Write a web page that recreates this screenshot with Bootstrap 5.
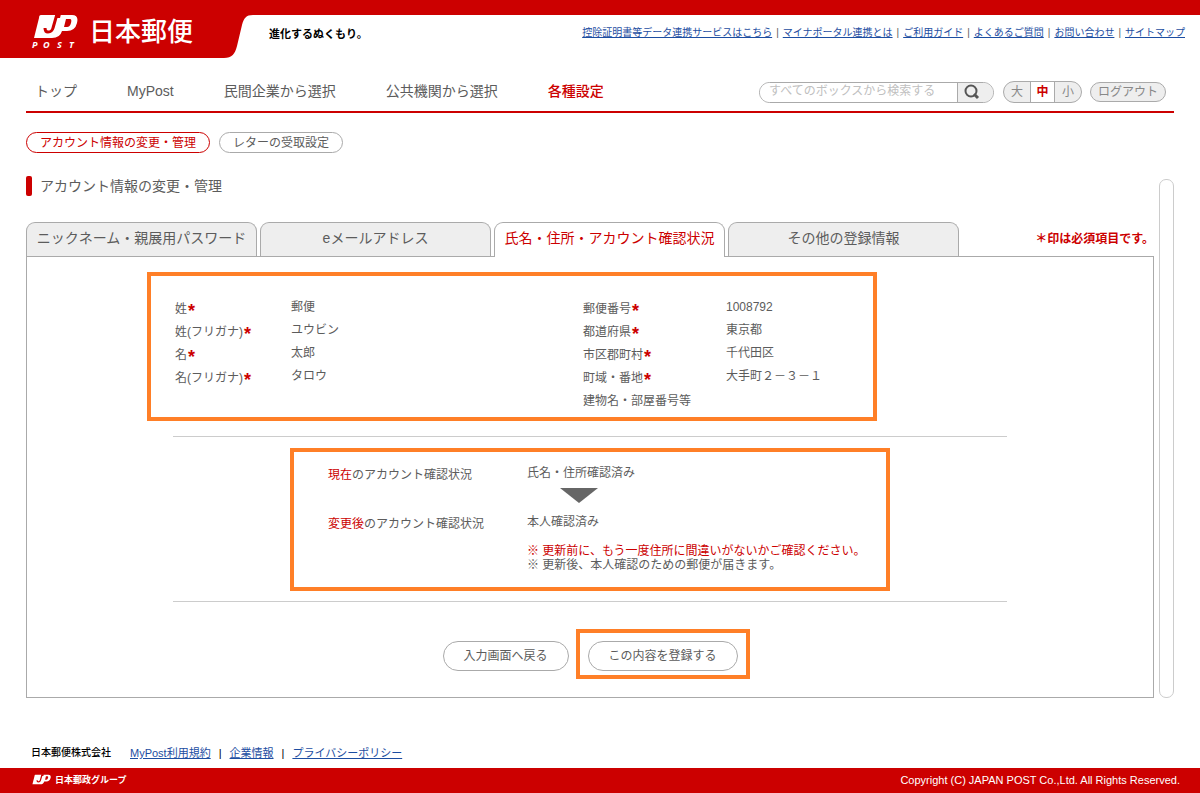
<!DOCTYPE html>
<html lang="ja">
<head>
<meta charset="utf-8">
<meta name="viewport" content="width=device-width, initial-scale=1">
<title>MyPost アカウント情報の変更・管理</title>
<link href="https://cdn.jsdelivr.net/npm/bootstrap@5.3.0/dist/css/bootstrap.min.css" rel="stylesheet">
<style>
:root { --jp-red: #c00; --jp-line: #aaa; --jp-text: #5c5c5c; --jp-link: #1c4da1; --jp-mark: #ff7f27; }
body { font: 12px/20px "Liberation Sans", "Noto Sans CJK JP", sans-serif; color: var(--jp-text); background: #fff; }
.jp-red { color: var(--jp-red); }
.jp-links a { color: var(--jp-link); }
.site-head { background: linear-gradient(var(--jp-red) 15px, #fff 15px); height: 58px; }
.brand { background: var(--jp-red); width: 220px; padding: 5px 0 0 31px; color: #fff; }
.brand-name { font-size: 26px; font-weight: 500; line-height: 53px; margin-left: 11px; padding-top: 2px; }
.slogan { font-size: 11px; font-weight: 700; color: #000; margin-left: 13px; padding-top: 24px; }
.top-links { font-size: 10px; padding: 23px 15px 0 0; }
.page { padding: 0 26px; }
.main-nav { border-bottom: 2px solid var(--jp-red); padding: 23px 8px 8px 9px; }
.main-nav .menu { gap: 50px; font-size: 14px; padding-bottom: 2px; }
.main-nav .menu a { color: var(--jp-text); text-decoration: none; }
.main-nav .menu a.active { color: var(--jp-red); font-weight: 500; }
.search-box { border: 1px solid var(--jp-line); width: 235px; height: 21px; overflow: hidden; }
.search-box input { border: 0; outline: 0; padding: 0 0 3px 9px; min-width: 0; color: var(--jp-text); }
.search-box input::placeholder { color: #c0c0c0; }
.search-box button { width: 36px; border: 0; border-left: 1px solid var(--jp-line); background: #eee; padding: 0 8px 0 0; }
.size-box { border: 1px solid var(--jp-line); height: 22px; overflow: hidden; background: #eee; margin-left: 9px; }
.size-box button { border: 0; background: none; padding: 0; width: 26px; color: #888; }
.size-box button.active { background: #fff; color: var(--jp-red); font-weight: 700; border: solid var(--jp-line); border-width: 0 1px; width: 25px; }
.logout { border: 1px solid var(--jp-line); background: #eee; color: #888; height: 20px; width: 76px; line-height: 18px; padding: 0; }
.sub-nav { margin-top: 19px; gap: 9px; }
.pill { border: 1px solid var(--jp-line); background: #fff; color: var(--jp-text); height: 21px; line-height: 19px; padding: 1px 13px 0; }
.pill.active { border-color: var(--jp-red); color: var(--jp-red); }
.work { margin-top: 23px; gap: 5px; }
.page-title { font-size: 14px; line-height: 20px; font-weight: 400; margin: 0 0 26px; }
.page-title::before { content: ""; width: 6px; height: 20px; border-radius: 2px; background: var(--jp-red); margin-right: 8px; }
.tab-row { gap: 3px; }
.tab-row button { font-size: 14px; width: 231px; height: 34px; border: 1px solid var(--jp-line); border-bottom: 0; border-radius: 9px 9px 0 0; background: #eee; color: var(--jp-text); padding: 0 0 4px; }
.tab-row button.active { background: #fff; color: var(--jp-red); height: 35px; margin-bottom: -1px; position: relative; }
.required-note { padding: 7px 0 0; }
.panel { border: 1px solid var(--jp-line); padding: 15px 146px 18px; }
.marked { border: 4px solid var(--jp-mark); }
.person { margin: 0 130px 0 -26px; padding: 20px 0 6px 24px; line-height: 23px; }
.person dl { display: grid; grid-template-columns: 116px 1fr; grid-auto-rows: 23px; margin: 0; }
.person dl + dl { grid-template-columns: 143px 1fr; }
.person dl:first-child { width: 408px; }
.person dd, .status dd { margin: 0; }
.person dt, .status dt { font-weight: 400; padding-top: 2px; }
.person dt b { color: var(--jp-red); font: 700 18px/1px "Liberation Sans", sans-serif; vertical-align: -4px; margin-left: 1px; }
.rule { border-top: 1px solid #ccc; opacity: 1; margin: 15px 0 11px; }
.rule.lower { margin: 10px 0 27px; }
.status { width: 600px; padding: 11px 0 15px 34px; }
.status dl { display: grid; grid-template-columns: 199px 1fr; margin: 0; }
.arrow { margin: 3px 0 9px 232px; }
.notes { line-height: 14px; margin: 10px 0 0 199px; }
.action { border: 1px solid var(--jp-line); background: #fff; color: var(--jp-text); height: 30px; padding: 0; }
.action.back { width: 126px; }
.action.save { width: 150px; }
.save-mark { padding: 8px 8px 4px; margin: 0 -12px 0 7px; }
.track { width: 15px; border: 1px solid #ccc; border-radius: 7px; margin-top: 3px; }
.foot-links { font-size: 11px; padding: 45px 31px 5px; color: #000; }
.foot-links strong { font-size: 10px; font-weight: 500; margin-right: 19px; }
.foot-bar { background: var(--jp-red); color: #fff; font-size: 11px; height: 25px; padding: 0 20px 2px 32px; }
.foot-bar .group { font-size: 9px; font-weight: 700; }
</style>
</head>
<body>
<header class="site-head d-flex">
  <div class="brand d-flex align-items-center flex-shrink-0">
    <svg width="47" height="36" viewBox="0 0 47 36" role="img" aria-label="JP POST">
      <defs><g id="jp">
        <path fill="#fff" d="M10 1H41Q48 1 46 9Q44 17 36 17H31Q29 24 21 24H3L8 4Q8 1 10 1Z"/>
        <path fill="none" stroke="#c00" stroke-width="3" d="M26 0L22 14Q21 18 17 18Q14 18 14 14"/>
        <path fill="#c00" d="M35 5H39Q41 5 40 9Q39 13 36 13H33Z"/>
        <path fill="#c00" d="M26 0H30L29 4H25Z"/>
      </g></defs>
      <use href="#jp"/>
      <text y="34" fill="#fff" font-family="Open Sans, sans-serif" font-size="9" font-weight="700" font-style="italic"><tspan x="1">P</tspan><tspan x="12">O</tspan><tspan x="26">S</tspan><tspan x="38">T</tspan></text>
    </svg>
    <span class="brand-name">日本郵便</span>
  </div>
  <svg class="flex-shrink-0" width="36" height="58" aria-hidden="true"><path fill="#c00" d="M0 0H36V15H33C26 15 24 18 22 25L17 46C15 54 12 58 4 58H0Z"/></svg>
  <div class="slogan text-nowrap">進化するぬくもり。</div>
  <nav class="top-links jp-links d-flex ms-auto text-nowrap"><a href="#">控除証明書等データ連携サービスはこちら</a><span class="mx-1">|</span><a href="#">マイナポータル連携とは</a><span class="mx-1">|</span><a href="#">ご利用ガイド</a><span class="mx-1">|</span><a href="#">よくあるご質問</a><span class="mx-1">|</span><a href="#">お問い合わせ</a><span class="mx-1">|</span><a href="#">サイトマップ</a></nav>
</header>

<div class="page">
  <div class="main-nav d-flex justify-content-between align-items-center text-nowrap">
    <nav class="menu d-flex">
      <a href="#">トップ</a><a href="#">MyPost</a><a href="#">民間企業から選択</a><a href="#">公共機関から選択</a><a href="#" class="active" aria-current="page">各種設定</a>
    </nav>
    <div class="d-flex align-items-center">
      <form class="search-box d-flex rounded-pill" role="search">
        <input class="flex-grow-1" type="search" aria-label="検索" placeholder="すべてのボックスから検索する">
        <button type="button" aria-label="検索する" class="d-flex align-items-center justify-content-center"><svg width="16" height="16" fill="none" stroke="#555" stroke-width="2"><circle cx="7" cy="7" r="5.500"/><path d="M10 10l4 4" stroke-width="3"/></svg></button>
      </form>
      <div class="size-box d-flex rounded-pill" role="group" aria-label="文字サイズ">
        <button type="button">大</button><button type="button" class="active">中</button><button type="button">小</button>
      </div>
      <button type="button" class="logout rounded-pill ms-2">ログアウト</button>
    </div>
  </div>

  <div class="sub-nav d-flex">
    <button type="button" class="pill active rounded-pill">アカウント情報の変更・管理</button>
    <button type="button" class="pill rounded-pill">レターの受取設定</button>
  </div>

  <main class="work d-flex">
    <div class="flex-grow-1">
      <h1 class="page-title d-flex">アカウント情報の変更・管理</h1>
      <div class="d-flex justify-content-between">
        <div class="tab-row d-flex" role="tablist">
          <button type="button" role="tab">ニックネーム・親展用パスワード</button>
          <button type="button" role="tab">eメールアドレス</button>
          <button type="button" role="tab" class="active" aria-selected="true">氏名・住所・アカウント確認状況</button>
          <button type="button" role="tab">その他の登録情報</button>
        </div>
        <strong class="required-note jp-red text-nowrap">＊印は必須項目です。</strong>
      </div>
      <section class="panel">
        <div class="person marked d-flex">
          <dl>
            <dt>姓<b>*</b></dt><dd>郵便</dd>
            <dt>姓(フリガナ)<b>*</b></dt><dd>ユウビン</dd>
            <dt>名<b>*</b></dt><dd>太郎</dd>
            <dt>名(フリガナ)<b>*</b></dt><dd>タロウ</dd>
          </dl>
          <dl>
            <dt>郵便番号<b>*</b></dt><dd>1008792</dd>
            <dt>都道府県<b>*</b></dt><dd>東京都</dd>
            <dt>市区郡町村<b>*</b></dt><dd>千代田区</dd>
            <dt>町域・番地<b>*</b></dt><dd>大手町２－３－１</dd>
            <dt>建物名・部屋番号等</dt><dd></dd>
          </dl>
        </div>
        <hr class="rule">
        <div class="status marked mx-auto">
          <dl>
            <dt><span class="jp-red">現在</span>のアカウント確認状況</dt><dd>氏名・住所確認済み</dd>
          </dl>
          <svg class="arrow d-block" width="38" height="15" aria-hidden="true"><path fill="#666" d="M0 0H38L19 15Z"/></svg>
          <dl>
            <dt><span class="jp-red">変更後</span>のアカウント確認状況</dt><dd>本人確認済み</dd>
          </dl>
          <div class="notes"><div class="jp-red">※ 更新前に、もう一度住所に間違いがないかご確認ください。</div><div>※ 更新後、本人確認のための郵便が届きます。</div></div>
        </div>
        <hr class="rule lower">
        <div class="d-flex justify-content-center align-items-baseline">
          <button type="button" class="action back rounded-pill">入力画面へ戻る</button>
          <div class="save-mark marked"><button type="button" class="action save rounded-pill d-block">この内容を登録する</button></div>
        </div>
      </section>
    </div>
    <div class="track flex-shrink-0"></div>
  </main>
</div>

<footer>
  <div class="foot-links jp-links d-flex"><strong>日本郵便株式会社</strong><a href="#">MyPost利用規約</a><span class="mx-2">|</span><a href="#">企業情報</a><span class="mx-2">|</span><a href="#">プライバシーポリシー</a></div>
  <div class="foot-bar d-flex justify-content-between align-items-center">
    <span class="group d-flex align-items-center"><svg width="19" height="11" viewBox="2 1 45 23" class="me-1" aria-hidden="true"><use href="#jp"/></svg>日本郵政グループ</span>
    <span>Copyright (C) JAPAN POST Co.,Ltd. All Rights Reserved.</span>
  </div>
</footer>
<script src="https://cdn.jsdelivr.net/npm/bootstrap@5.3.0/dist/js/bootstrap.bundle.min.js"></script>
</body>
</html>
